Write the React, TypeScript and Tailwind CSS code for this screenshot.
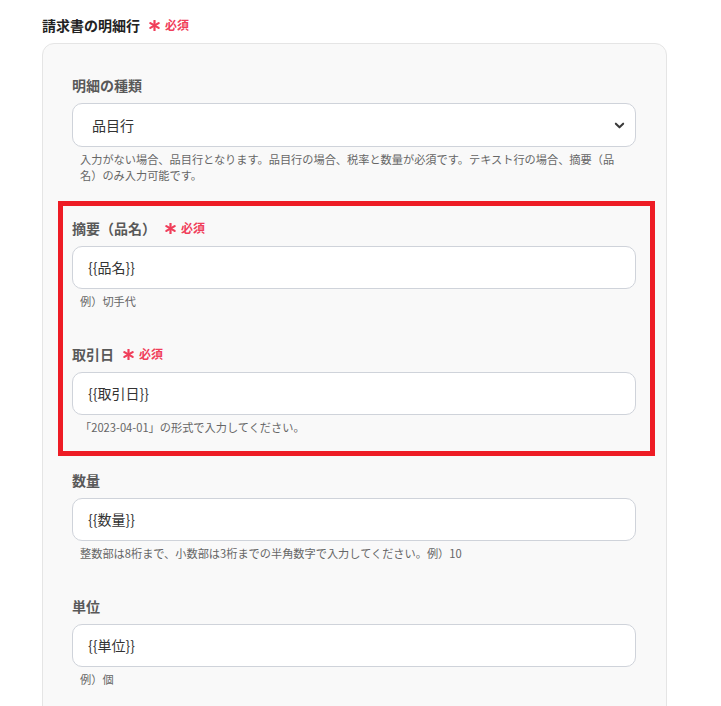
import React from "react";

const Asterisk: React.FC = () => (
    <svg viewBox="0 0 12 12" className="w-[11px] h-[11px] shrink-0" aria-hidden>
        <g stroke="#f03e5a" strokeWidth="2.4" strokeLinecap="round">
            <line x1="6" y1="0.8" x2="6" y2="11.2" />
            <line x1="1.5" y1="3.4" x2="10.5" y2="8.6" />
            <line x1="1.5" y1="8.6" x2="10.5" y2="3.4" />
        </g>
    </svg>
);

const Required: React.FC = () => (
    <span className="flex items-center gap-[5px] ml-[9px]">
        <Asterisk />
        <span className="text-[12px] font-bold text-[#f03e5a] leading-5">必須</span>
    </span>
);

type FieldProps = {
    label: string;
    value: string;
    help: string;
    required?: boolean;
    select?: boolean;
};

const Field: React.FC<FieldProps> = ({ label, value, help, required, select }) => (
    <div className="flex flex-col">
        <div className="flex items-center h-5 mb-2">
            <span className="text-[14px] font-bold text-[#595959] leading-5">{label}</span>
            {required && <Required />}
        </div>
        {select ? (
            <div className="flex items-center justify-between h-[44px] bg-white border border-[#cfd3da] rounded-[10px] pl-[19px] pr-[10px]">
                <span className="text-[14px] text-[#333]">{value}</span>
                <svg viewBox="0 0 12 12" className="w-[11px] h-[11px]" aria-hidden>
                    <path d="M2 4 L6 8 L10 4" fill="none" stroke="#3a3a3a" strokeWidth="2.2" strokeLinecap="round" strokeLinejoin="round" />
                </svg>
            </div>
        ) : (
            <div className="flex items-center h-[43px] bg-white border border-[#cfd3da] rounded-[10px] pl-[15px]">
                <span className="text-[14px] text-[#333]">{value}</span>
            </div>
        )}
        <p className="mt-1 px-2 text-[11.2px] leading-4 text-[#666]">{help}</p>
    </div>
);

export default function App() {
    return (
        <div className="min-h-screen bg-white font-['Noto_Sans_CJK_JP','Noto_Sans',sans-serif] pt-[15px] pl-[42px] w-[721px] overflow-hidden">
            <div className="flex items-center h-5 mb-2">
                <span className="text-[14px] font-bold text-[#222] leading-5">請求書の明細行</span>
                <Required />
            </div>

            <div className="w-[625px] bg-[#f9f9f9] border border-[#e5e5e5] rounded-[12px] pt-[31px] pb-10 pl-[29px] pr-[30px] flex flex-col gap-[35px]">
                <Field
                    label="明細の種類"
                    value="品目行"
                    select
                    help="入力がない場合、品目行となります。品目行の場合、税率と数量が必須です。テキスト行の場合、摘要（品名）のみ入力可能です。"
                />

                {/* highlighted pair */}
                <div className="relative flex flex-col gap-[35px]">
                    <Field label="摘要（品名）" value="{{品名}}" required help="例）切手代" />
                    <Field label="取引日" value="{{取引日}}" required help="「2023-04-01」の形式で入力してください。" />
                    <div className="absolute -top-[17px] -bottom-[21px] -left-[14px] -right-[19px] border-[5px] border-[#ee1c25] pointer-events-none" />
                </div>

                <Field
                    label="数量"
                    value="{{数量}}"
                    help="整数部は8桁まで、小数部は3桁までの半角数字で入力してください。例）10"
                />
                <Field label="単位" value="{{単位}}" help="例）個" />
            </div>
        </div>
    );
}
